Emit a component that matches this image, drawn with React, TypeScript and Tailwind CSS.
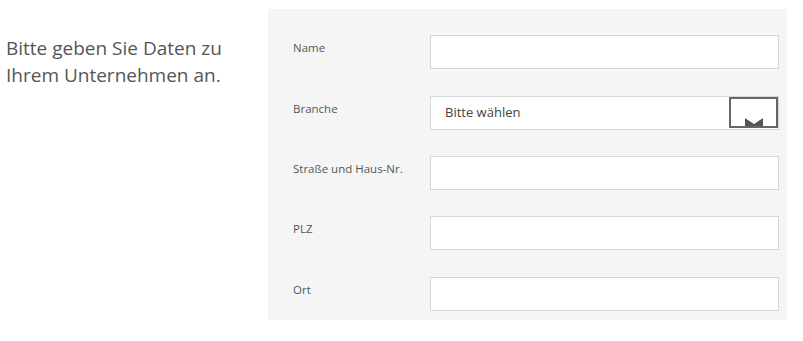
export default function App() {
  const fields = [
    { label: "Straße und Haus-Nr.", mt: "mt-[26px]" },
    { label: "PLZ", mt: "mt-[26px]" },
    { label: "Ort", mt: "mt-[27px]" },
  ];
  return (
    <div className="flex w-[803px] h-[341px] bg-white" style={{ fontFamily: '"Open Sans", sans-serif' }}>
      <div className="w-[268px] pl-[6px] pt-[35px] text-[19px] leading-[27px] text-[#555]">
        Bitte geben Sie Daten zu
        <br />
        Ihrem Unternehmen an.
      </div>
      <div className="mt-[9px] w-[519px] h-[311px] bg-[#f5f5f5] pl-[25px] pr-[8px] pt-[26px] flex flex-col">
        <div className="flex items-center h-[34px]">
          <div className="w-[137px] pb-[9px] text-[11.5px] text-[#555]">Name</div>
          <div className="flex-1 h-full bg-white border border-[#d6d6d6]" />
        </div>
        <div className="flex items-center h-[34px] mt-[27px]">
          <div className="w-[137px] pb-[9px] text-[11.5px] text-[#555]">Branche</div>
          <div className="flex-1 h-full bg-white border border-[#d6d6d6] flex items-center">
            <span className="flex-1 pl-[14px] text-[13px] text-[#444]">Bitte wählen</span>
            <div className="w-[49px] h-[31px] mt-[-1px] border-2 border-[#666] flex items-end justify-center">
              <svg width="18" height="8" viewBox="0 0 18 8">
                <polygon points="0,0 9,6 18,0 18,8 0,8" fill="#555" />
              </svg>
            </div>
          </div>
        </div>
        {fields.map((f) => (
          <div key={f.label} className={`flex items-center h-[34px] ${f.mt}`}>
            <div className="w-[137px] pb-[9px] text-[11.5px] text-[#555]">{f.label}</div>
            <div className="flex-1 h-full bg-white border border-[#d6d6d6]" />
          </div>
        ))}
      </div>
    </div>
  );
}
